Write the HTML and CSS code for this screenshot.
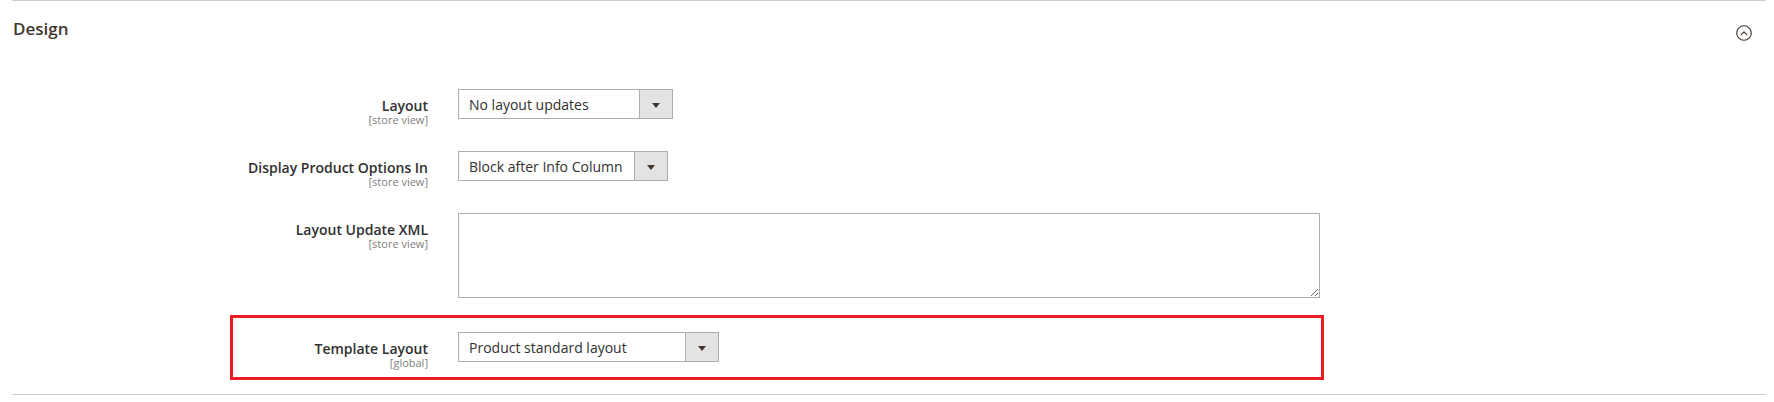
FILE: index.html
```html
<!DOCTYPE html>
<html lang="en">
<head>
<meta charset="utf-8">
<title>Design</title>
<link rel="stylesheet" href="styles.css">
</head>
<body>
<section class="section">
  <div class="section-header">
    <h2 class="section-title">Design</h2>
    <span class="collapse-icon" aria-hidden="true">
      <svg width="16" height="16" viewBox="0 0 16 16">
        <circle cx="8" cy="8" r="7.3" fill="none" stroke="#41362f" stroke-width="1.1"/>
        <path d="M5.2 9.6 L8 6.8 L10.8 9.6" fill="none" stroke="#41362f" stroke-width="1.2" stroke-linecap="round" stroke-linejoin="round"/>
      </svg>
    </span>
  </div>
  <div class="fields">
    <div class="field">
      <div class="field-label">
        <span class="label-text">Layout</span>
        <span class="label-scope">[store view]</span>
      </div>
      <div class="select select--layout">
        <span class="select-text">No layout updates</span>
        <span class="select-button"><span class="arrow"></span></span>
      </div>
    </div>
    <div class="field">
      <div class="field-label">
        <span class="label-text">Display Product Options In</span>
        <span class="label-scope">[store view]</span>
      </div>
      <div class="select select--options">
        <span class="select-text">Block after Info Column</span>
        <span class="select-button"><span class="arrow"></span></span>
      </div>
    </div>
    <div class="field">
      <div class="field-label">
        <span class="label-text">Layout Update XML</span>
        <span class="label-scope">[store view]</span>
      </div>
      <textarea class="textarea"></textarea>
    </div>
    <div class="highlight">
      <div class="field">
        <div class="field-label field-label--inner">
          <span class="label-text">Template Layout</span>
          <span class="label-scope">[global]</span>
        </div>
        <div class="select select--template">
          <span class="select-text">Product standard layout</span>
          <span class="select-button"><span class="arrow"></span></span>
        </div>
      </div>
    </div>
  </div>
</section>
</body>
</html>
```

FILE: styles.css
```css
* { box-sizing: border-box; }

body {
  margin: 0;
  background: #ffffff;
  font-family: "Open Sans", "Liberation Sans", sans-serif;
  color: #303030;
}

.section {
  margin: 0 8px 0 12px;
  border-top: 1px solid #cccccc;
  border-bottom: 1px solid #cccccc;
  padding-bottom: 14px;
}

.section-header {
  display: flex;
  justify-content: space-between;
  align-items: flex-start;
  padding: 16px 14px 0 1px;
}

.section-title {
  margin: 0;
  font-size: 17px;
  line-height: 24px;
  font-weight: 600;
  color: #41362f;
}

.collapse-icon {
  display: block;
  width: 16px;
  height: 16px;
  margin-top: 8px;
}
.collapse-icon svg { display: block; }

.fields {
  padding-top: 48px;
}

.field {
  display: flex;
  align-items: flex-start;
  gap: 30px;
}
.field + .field {
  margin-top: 26px;
}

.field-label {
  width: 416px;
  flex: none;
  text-align: right;
  padding-top: 8px;
}
.field-label--inner {
  width: 195px;
}

.label-text {
  display: block;
  font-size: 14px;
  line-height: 17px;
  font-weight: 600;
  color: #303030;
  white-space: nowrap;
}

.label-scope {
  display: block;
  font-size: 11px;
  line-height: 11px;
  color: #808080;
  white-space: nowrap;
}

.select {
  display: flex;
  height: 30px;
  border: 1px solid #adadad;
  background: #ffffff;
  flex: none;
}
.select--layout { width: 215px; }
.select--options { width: 210px; }
.select--template { width: 261px; }

.select-text {
  flex: 1;
  padding: 1px 10px 0;
  font-size: 14px;
  line-height: 27px;
  color: #303030;
  white-space: nowrap;
  overflow: hidden;
}

.select-button {
  width: 33px;
  flex: none;
  border-left: 1px solid #adadad;
  background: #e3e3e3;
  display: flex;
  align-items: center;
  justify-content: center;
  padding-top: 2px;
}

.arrow {
  width: 0;
  height: 0;
  border-left: 4px solid transparent;
  border-right: 4px solid transparent;
  border-top: 5px solid #41362f;
}

.textarea {
  display: block;
  width: 862px;
  height: 85px;
  margin: 0;
  border: 1px solid #adadad;
  border-radius: 0;
  padding: 6px 10px;
  font-family: "Open Sans", "Liberation Sans", sans-serif;
  font-size: 14px;
  background: #ffffff;
  flex: none;
}

.highlight {
  width: 1094px;
  margin: 17px 0 0 218px;
  border: 3px solid #ed1c24;
  padding: 14px 0 9px;
}
```
